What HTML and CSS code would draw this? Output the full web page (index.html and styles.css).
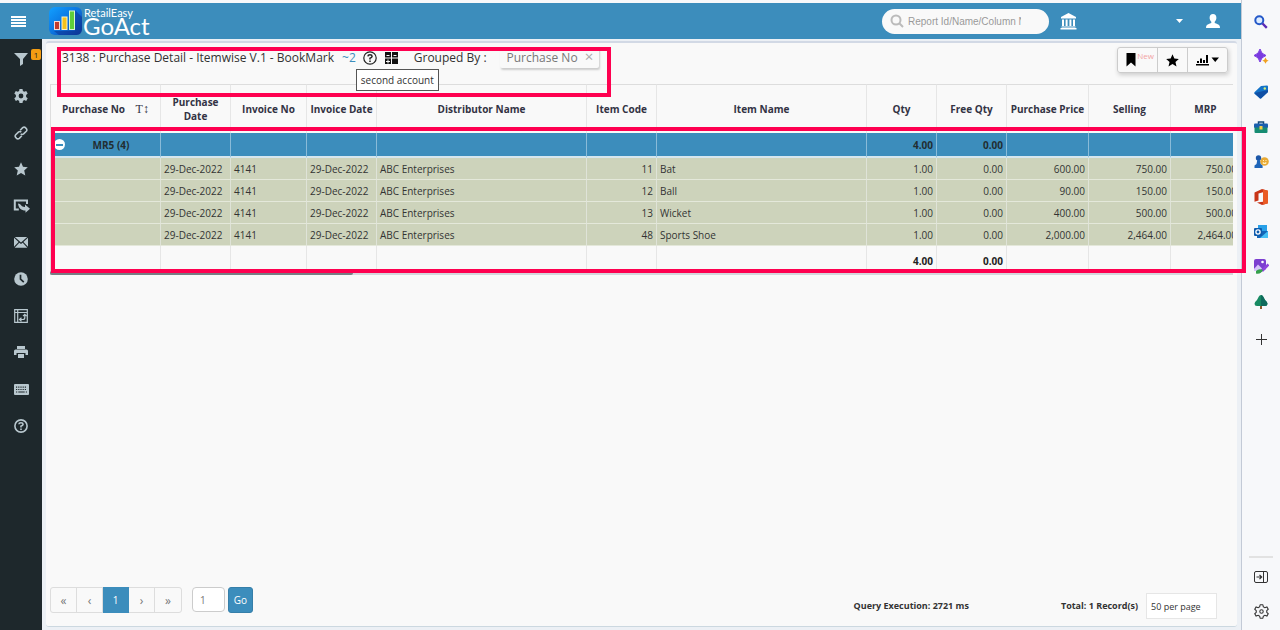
FILE: index.html
```html
<!DOCTYPE html>
<html lang="en">

<head>
  <meta charset="utf-8">
  <title>RetailEasy GoAct</title>
  <link rel="stylesheet" href="styles.css">
</head>

<body>
  <div class="app">
    <header class="topbar">
      <button class="icon-btn menu-btn" aria-label="Menu">
        <svg width="15" height="11" viewBox="0 0 15 11"><path d="M0 1h15M0 4h15M0 7h15M0 10h15" stroke="#fff" stroke-width="1.800"/></svg>
      </button>
      <a class="logo" href="#">
        <svg width="33" height="28" viewBox="0 0 33 28">
          <defs>
            <linearGradient id="lg" x1="0" y1="0" x2="1" y2="1">
              <stop offset="0" stop-color="#12a0ff"/>
              <stop offset=".5" stop-color="#0b74e0"/>
              <stop offset="1" stop-color="#123a9c"/>
            </linearGradient>
          </defs>
          <rect width="33" height="28" rx="6" fill="url(#lg)"/>
          <path d="M5 24l5 4h17q6 0 6-6V10l-7-7v21z" fill="#0a2f8f" opacity=".5"/>
          <rect x="5.500" y="14.500" width="5" height="8" fill="#c0392b" stroke="#f3d9d5"/>
          <rect x="13" y="10" width="5" height="12.500" fill="#f5c11c" stroke="#fff3c4"/>
          <rect x="20.500" y="4" width="5" height="18.500" fill="#5fce3a" stroke="#d8f8cc"/>
        </svg>
        <span class="logo-text"><small>RetailEasy</small><b>GoAct</b></span>
      </a>
      <div class="search">
        <svg width="14" height="14" viewBox="0 0 14 14" fill="none" stroke="#bbb" stroke-width="2"><circle cx="6" cy="6" r="4.500"/><path d="M9.300 9.300l3.700 3.700"/></svg>
        <input type="text" aria-label="Search report" placeholder="Report Id/Name/Column Name">
      </div>
      <button class="icon-btn bank-btn" aria-label="Branch">
        <svg width="17" height="17" viewBox="0 0 17 17" fill="#fff"><path d="M8.500 0L16 4v1.500H1V4zM2 6.500h2V13H2zM5.600 6.500h2V13h-2zM9.400 6.500h2V13h-2zM13 6.500h2V13h-2zM1.500 13.500h14v1h-14zM.5 15h16v1.500H.5z"/></svg>
      </button>
      <button class="icon-btn caret-btn" aria-label="Branch list">
        <svg width="7" height="4" viewBox="0 0 7 4"><path d="M0 0h7L3.500 4z" fill="#fff"/></svg>
      </button>
      <button class="icon-btn user-btn" aria-label="User">
        <svg width="14" height="14" viewBox="0 0 14 14" fill="#fff"><path d="M7 0c2.200 0 3.400 1.600 3.400 3.800 0 1.700-.8 3.200-1.700 4v1.300c1.600.8 4.700 1.500 5.100 3.200L14 14H0l.2-1.700c.4-1.700 3.500-2.400 5.100-3.200V7.800c-.9-.8-1.700-2.300-1.700-4C3.600 1.600 4.800 0 7 0z"/></svg>
      </button>
    </header>

    <div class="body">
      <nav class="sidebar">
        <a href="#" aria-label="Filter"><svg width="14" height="14" viewBox="0 0 14 14"><path d="M0 1h14L9 7v5l-3 2V7z"/></svg><span class="badge">1</span></a>
        <a href="#" aria-label="Settings"><svg width="14" height="14" viewBox="0 0 14 14"><path fill-rule="evenodd" d="M5.500 0h3l.4 2 1.300.7 2-.8 1.500 2.600-1.600 1.400v2l1.600 1.400-1.500 2.600-2-.8-1.300.8-.4 2.100h-3l-.4-2.100-1.300-.8-2 .8L.3 9.300l1.600-1.400v-2L.3 4.500l1.500-2.600 2 .8L5.100 2zM7 4.600a2.400 2.400 0 100 4.800 2.400 2.400 0 000-4.800z"/></svg></a>
        <a href="#" aria-label="Links"><svg class="line" width="14" height="14" viewBox="0 0 14 14"><path d="M6.200 4.300l2.500-2.600q1.400-1.200 2.800 0l.8.900q1.100 1.300 0 2.600L9.600 7.900q-1.500 1.200-2.900 0M7.800 9.700l-2.500 2.600q-1.400 1.200-2.800 0l-.8-.9q-1.100-1.300 0-2.600l2.700-2.700q1.500-1.200 2.900 0"/></svg></a>
        <a href="#" aria-label="Favourites"><svg width="14" height="14" viewBox="0 0 14 14"><path d="M7 .3l2 4.500 4.800.5-3.600 3.200 1.100 4.900L7 10.900l-4.300 2.500 1.100-4.900L.2 5.300 5 4.800z"/></svg></a>
        <a href="#" aria-label="Share"><svg width="17" height="14" viewBox="0 0 17 14"><path d="M14 5V1.500H1.800v9h4" fill="none" stroke="#b8c7ce" stroke-width="2"/><path d="M5 4.500c3 0 3 3.500 7 3.500V5.600l5 4.200-4.500 4v-2.300C8 11.500 5.500 9 5 4.500z"/></svg></a>
        <a href="#" aria-label="Mail"><svg width="14" height="11" viewBox="0 0 14 11"><path d="M.8 0h12.400L7 5.600zM0 .7L4.600 5 0 9.800zM14 .7L9.400 5 14 9.800zM5.300 5.700L7 7.100l1.700-1.400 4.600 5.100H.7z"/></svg></a>
        <a href="#" aria-label="Schedule"><svg width="14" height="14" viewBox="0 0 14 14"><circle cx="7" cy="7" r="6.800"/><path d="M6.500 2.800v4.400l3.300 3" fill="none" stroke="#1e282c" stroke-width="1.700"/></svg></a>
        <a href="#" aria-label="Pivot"><svg class="line thin" width="14" height="14" viewBox="0 0 14 14"><path d="M.7.700h12.600v12.600H.7zM.7 3.500h12.600M3.700.7v12.600M6 10.500h3q1.800 0 1.800-2V6M7.500 8.700l-2 1.800 2 1.800M9 7.200l1.800-1.800 1.700 1.800"/></svg></a>
        <a href="#" aria-label="Print"><svg width="14" height="12" viewBox="0 0 14 12"><path fill-rule="evenodd" d="M3 0h8v3H3zM1.500 3.500h11Q14 3.500 14 5v4h-2.500V7h-9v2H0V5q0-1.500 1.500-1.500zM4 8h6v4H4z"/></svg></a>
        <a href="#" aria-label="Keyboard"><svg width="15" height="11" viewBox="0 0 15 11"><rect width="15" height="11" rx="1"/><path d="M2 3.200h11M2 5.500h11" stroke="#1e282c" stroke-width="1.200" stroke-dasharray="1.200 1"/><path d="M2 8h1.200M4.300 8h6.400M11.800 8H13" stroke="#1e282c" stroke-width="1.200"/></svg></a>
        <a href="#" aria-label="Help"><svg class="line" width="14" height="14" viewBox="0 0 14 14"><circle cx="7" cy="7" r="6.100"/><path d="M4.900 5.300Q5 3.800 7 3.800t2.100 1.500Q9.100 6.500 7 7.200v1.200M7 9.500v1.600"/></svg></a>
      </nav>

      <main class="panel">
        <div class="title-row">
          <h1>3138 : Purchase Detail - Itemwise V.1 - BookMark</h1>
          <a class="count" href="#">~2</a>
          <button class="icon-btn help-btn" aria-label="Help">
            <svg width="14" height="14" viewBox="0 0 14 14" fill="none" stroke="#222" stroke-width="1.200"><circle cx="7" cy="7" r="6.200"/><path d="M4.900 5.400Q5 3.800 7 3.800t2.100 1.500Q9.100 6.500 7 7.200v1.200M7 9.500v1.400" stroke-width="1.500"/></svg>
            <span class="tooltip">second account</span>
          </button>
          <button class="icon-btn calc-btn" aria-label="Calculator">
            <svg width="13" height="12" viewBox="0 0 13 12"><path d="M0 0h6v5.500H0zM7 0h6v5.500H7zM0 6.500h6V12H0zM7 6.500h6V12H7z" fill="#111"/><path d="M1.500 3.500h3M1 9.500h4M3 7.500v4M8.500 3.500h3" stroke="#f9f9f9"/></svg>
          </button>
          <span class="grouped">Grouped By :</span>
          <span class="chip">Purchase No <button aria-label="Remove grouping">×</button></span>
          <div class="tools">
            <button aria-label="Bookmark"><svg width="10" height="14" viewBox="0 0 10 14"><path d="M.5 0h9v13.500L5 9.500l-4.500 4z"/></svg><sup>New</sup></button>
            <button aria-label="Favourite"><svg width="13" height="13" viewBox="0 0 14 14"><path d="M7 .3l2 4.500 4.800.5-3.600 3.200 1.100 4.900L7 10.900l-4.300 2.500 1.100-4.900L.2 5.300 5 4.800z"/></svg></button>
            <button aria-label="Chart"><svg width="23" height="12" viewBox="0 0 23 12"><path d="M0 10h13v1.500H0zM1 7h2v2H1zM4 4.500h2V9H4zM7 6h2v3H7zM10 1h2v8h-2zM15.500 3.500H23L19.200 8z"/></svg></button>
          </div>
          <div class="mark mark-title"></div>
        </div>

        <div class="grid">
          <div class="grid-scroll">
            <table>
              <colgroup>
                <col class="w-no"><col class="w-sm"><col class="w-inv"><col class="w-sm"><col class="w-name"><col class="w-sm"><col class="w-name"><col class="w-sm"><col class="w-sm"><col class="w-price"><col class="w-price"><col class="w-sm">
              </colgroup>
              <thead>
                <tr>
                  <th>Purchase No <span class="sort">T↕</span></th>
                  <th>Purchase Date</th>
                  <th>Invoice No</th>
                  <th>Invoice Date</th>
                  <th>Distributor Name</th>
                  <th>Item Code</th>
                  <th>Item Name</th>
                  <th>Qty</th>
                  <th>Free Qty</th>
                  <th>Purchase Price</th>
                  <th>Selling</th>
                  <th>MRP</th>
                </tr>
              </thead>
              <tbody>
                <tr class="group">
                  <td><div class="group-name"><button aria-label="Collapse group"></button><span>MR5 (4)</span></div></td>
                  <td></td><td></td><td></td><td></td><td></td><td></td>
                  <td class="num">4.00</td><td class="num">0.00</td><td></td><td></td><td></td>
                </tr>
                <tr>
                  <td></td><td>29-Dec-2022</td><td>4141</td><td>29-Dec-2022</td><td>ABC Enterprises</td><td class="num">11</td><td>Bat</td>
                  <td class="num">1.00</td><td class="num">0.00</td><td class="num">600.00</td><td class="num">750.00</td><td class="num">750.00</td>
                </tr>
                <tr>
                  <td></td><td>29-Dec-2022</td><td>4141</td><td>29-Dec-2022</td><td>ABC Enterprises</td><td class="num">12</td><td>Ball</td>
                  <td class="num">1.00</td><td class="num">0.00</td><td class="num">90.00</td><td class="num">150.00</td><td class="num">150.00</td>
                </tr>
                <tr>
                  <td></td><td>29-Dec-2022</td><td>4141</td><td>29-Dec-2022</td><td>ABC Enterprises</td><td class="num">13</td><td>Wicket</td>
                  <td class="num">1.00</td><td class="num">0.00</td><td class="num">400.00</td><td class="num">500.00</td><td class="num">500.00</td>
                </tr>
                <tr>
                  <td></td><td>29-Dec-2022</td><td>4141</td><td>29-Dec-2022</td><td>ABC Enterprises</td><td class="num">48</td><td>Sports Shoe</td>
                  <td class="num">1.00</td><td class="num">0.00</td><td class="num">2,000.00</td><td class="num">2,464.00</td><td class="num">2,464.00</td>
                </tr>
              </tbody>
              <tfoot>
                <tr>
                  <td></td><td></td><td></td><td></td><td></td><td></td><td></td>
                  <td class="num">4.00</td><td class="num">0.00</td><td></td><td></td><td></td>
                </tr>
              </tfoot>
            </table>
          </div>
          <div class="scrollbar"><div class="thumb"></div></div>
          <div class="mark mark-grid"></div>
        </div>

        <footer class="footer">
          <div class="pages">
            <button aria-label="First page">«</button>
            <button aria-label="Previous page">‹</button>
            <button class="active">1</button>
            <button aria-label="Next page">›</button>
            <button aria-label="Last page">»</button>
          </div>
          <input class="page-no" type="text" aria-label="Page number" value="1">
          <button class="go">Go</button>
          <span class="query">Query Execution: 2721 ms</span>
          <label class="total" for="per-page">Total: 1 Record(s)</label>
          <select id="per-page">
            <option>50 per page</option>
            <option>100 per page</option>
          </select>
        </footer>
      </main>
    </div>
  </div>

  <aside class="edge">
    <a href="#" aria-label="Search"><svg width="14" height="14" viewBox="0 0 14 14" fill="none"><circle cx="5.300" cy="5.300" r="4" fill="#dcecff" stroke="#2458c8" stroke-width="2"/><path d="M8.500 8.500l4.300 4.300" stroke="#5b2bb5" stroke-width="2.400"/></svg></a>
    <a href="#" aria-label="Discover"><svg width="15" height="15" viewBox="0 0 15 15"><path d="M6 0q1 5 6 6.500Q7 8 6 13 5 8 0 6.500 5 5 6 0z" fill="#7a3be0" stroke="#7a3be0"/><path d="M11.500 8.500q.6 2.500 3.200 3-2.600.7-3.200 3.200-.6-2.500-3.200-3.200 2.600-.5 3.200-3z" fill="#f0a020"/></svg></a>
    <a href="#" aria-label="Shopping"><svg width="14" height="14" viewBox="0 0 14 14"><path d="M7 1l6-.5q1 0 1 1V7l-6.500 6q-1 1-2 0L.7 9q-1-1 0-2z" fill="#1473c8"/><path d="M.5 8L14 5v2l-6.500 6q-1 1-2 0z" fill="#0f4fa5"/><circle cx="10.800" cy="3.500" r="1.200" fill="#d8f07a"/></svg></a>
    <a href="#" aria-label="Tools"><svg width="14" height="12" viewBox="0 0 14 12"><path d="M4.500 3V1h5v2" fill="none" stroke="#174a7a" stroke-width="1.500"/><rect y="2.500" width="14" height="4.500" rx="1" fill="#1b5fae"/><path d="M.5 6.500h13V11q0 1-1 1h-11q-1 0-1-1z" fill="#168c72"/><rect x="5.500" y="5" width="3" height="3.500" fill="#f4ce45"/></svg></a>
    <a href="#" aria-label="Games"><svg width="15" height="13" viewBox="0 0 15 13"><circle cx="10.500" cy="6.500" r="4.300" fill="#e8aa35"/><path d="M9 5.500h1M11.500 5.500h1M8.800 7.500q1.700 2 3.500 0" fill="none" stroke="#fff0c0" stroke-width="1.200"/><circle cx="4.500" cy="3" r="2.700" fill="#1c57a8"/><path d="M3.300 5h2.500l.8 4 2 1.500V13H.5v-2.500l2-1.500z" fill="#1f65b8"/></svg></a>
    <a href="#" aria-label="Office"><svg width="14" height="16" viewBox="0 0 14 16"><path d="M8 0l6 1.800v12.400L8 16l-5-2.500 6-.7V3.200L4.500 4.500v7L.5 12.800V3.500z" fill="#c83518"/><path d="M9 .5l5 1.300v12.400L9 15.700z" fill="#ea5b24"/></svg></a>
    <a href="#" aria-label="Outlook"><svg width="14" height="14" viewBox="0 0 14 14"><path d="M4 0h9v8H4z" fill="#28a0e8"/><path d="M3 6l11 0v7H3z" fill="#1466b8"/><path d="M14 6l-8 7h8z" fill="#45c0f5"/><rect y="3" width="8" height="8" rx="1" fill="#0f5cad"/><circle cx="4" cy="7" r="2.100" fill="none" stroke="#fff" stroke-width="1.300"/></svg></a>
    <a href="#" aria-label="Image creator"><svg width="16" height="15" viewBox="0 0 16 15"><rect x="1" width="12" height="11" rx="2" fill="#7c3fd0"/><circle cx="9.500" cy="3" r="1.300" fill="#fff"/><path d="M1 10l4-4.500 4 4L7 12H1z" fill="#d7c4fa"/><path d="M15.500 5.500L9 12" stroke="#8f45dd" stroke-width="2.600"/><path d="M3 12q3-3 7-1-2 4.500-7 3.500z" fill="#35a04c"/></svg></a>
    <a href="#" aria-label="Drop"><svg width="14" height="14" viewBox="0 0 14 14"><path d="M6 9h2v5H6z" fill="#8a5a2b"/><path d="M7 0q1.500 0 2.300 1.800L11 5q2.500 2 2.500 3.800Q13.500 11 11 11H3Q.5 11 .5 8.800.5 7 3 5l1.700-3.200Q5.500 0 7 0z" fill="#178a62"/><path d="M7 0q1.500 0 2.300 1.800L11 5q2.500 2 2.500 3.800Q13.500 11 11 11H7z" fill="#0f6b5c"/></svg></a>
    <a class="add" href="#" aria-label="Add"><svg width="11" height="11" viewBox="0 0 11 11"><path d="M5.500 0v11M0 5.500h11" stroke="#333"/></svg></a>
    <hr>
    <a href="#" aria-label="Hide sidebar"><svg width="14" height="12" viewBox="0 0 14 12" fill="none" stroke="#333"><rect x=".5" y=".5" width="13" height="11" rx="1.500"/><path d="M9.500.5v11"/><path d="M2.500 6h5M5.500 3.800L7.700 6 5.500 8.200" stroke-width="1.200"/></svg></a>
    <a href="#" aria-label="Settings"><svg width="15" height="15" viewBox="0 0 14 14" fill="none" stroke="#333"><path stroke-linejoin="round" d="M5.700.7h2.600l.4 1.900 1.300.8 2-.7 1.300 2.200L11.900 6.200v1.600l1.400 1.300L12 11.300l-2-.7-1.300.8-.4 1.900H5.700l-.4-1.900-1.300-.8-2 .7L.7 9.100l1.400-1.300V6.200L.7 4.900 2 2.700l2 .7 1.300-.8z"/><circle cx="7" cy="7" r="1.600"/></svg></a>
  </aside>
</body>

</html>
```
FILE: styles.css
```css
* {
  box-sizing: border-box;
}

body {
  display: flex;
  height: 100vh;
  margin: 0;
  overflow: hidden;
  background: #f7f8fa;
  color: #333;
  font-family: "Open Sans", "Noto Sans", sans-serif;
  font-size: 10px;
}

button, input, select {
  font: inherit;
  color: inherit;
}

a {
  color: inherit;
  text-decoration: none;
}

svg {
  display: block;
}

.icon-btn {
  padding: 0;
  border: 0;
  background: none;
}

.app {
  flex: 1;
  min-width: 0;
  display: flex;
  flex-direction: column;
  padding-top: 3px;
  border-right: 1px solid #c3cad6;
}

/* top bar */
.topbar {
  display: flex;
  align-items: center;
  height: 36px;
  padding: 0 21px 0 11px;
  background: #3c8dbc;
}

.logo {
  display: flex;
  align-items: center;
  margin-left: 23px;
  color: #fff;
  font-family: Lato, sans-serif;
}

.logo-text {
  display: flex;
  flex-direction: column;
  margin-left: 1px;
  padding-bottom: 2px;
}

.logo-text small {
  padding-left: 1px;
  font-size: 11px;
  line-height: 11px;
}

.logo-text b {
  font-size: 24px;
  font-weight: 400;
  line-height: 15px;
}

.search {
  display: flex;
  align-items: center;
  gap: 4px;
  width: 167px;
  height: 25px;
  margin-left: auto;
  padding: 0 28px 0 8px;
  border-radius: 13px;
  background: #f9f9f9;
}

.search svg {
  flex: none;
}

.search input {
  min-width: 0;
  width: 100%;
  padding: 0;
  border: 0;
  background: none;
  font-family: "Liberation Sans", sans-serif;
}

.search input::placeholder {
  color: #999;
}

.bank-btn {
  margin-left: 11px;
}

.caret-btn {
  margin-left: 99px;
}

.user-btn {
  margin-left: 23px;
}

.body {
  flex: 1;
  min-height: 0;
  display: flex;
  background: #ecf0f5;
}

/* left menu */
.sidebar {
  display: grid;
  grid-template-rows: repeat(11, 1fr);
  width: 42px;
  padding: 2px 0 186px;
  background: #1e282c;
}

.sidebar a {
  position: relative;
  display: flex;
  align-items: center;
  justify-content: center;
}

.sidebar svg {
  fill: #b8c7ce;
}

.sidebar svg.line {
  fill: none;
  stroke: #b8c7ce;
  stroke-width: 1.6;
}

.sidebar svg.thin {
  stroke-width: 1.2;
}

.badge {
  position: absolute;
  top: 8px;
  right: 1px;
  width: 10px;
  border-radius: 2px;
  background: #f39c12;
  color: #222;
  font-size: 8px;
  line-height: 11px;
  text-align: center;
}

/* report panel */
.panel {
  flex: 1;
  min-width: 0;
  display: flex;
  flex-direction: column;
  margin: 2px 4px 3px;
  border-top: 2px solid #d2d9e5;
  border-bottom: 1px solid #ccd8e0;
  border-radius: 3px;
  background: #f9f9f9;
}

.title-row {
  position: relative;
  display: flex;
  align-items: flex-start;
  height: 41px;
  padding: 3px 9px 0 16px;
  font-size: 12px;
  font-weight: 500;
  line-height: 24px;
  white-space: nowrap;
}

h1 {
  margin: 0;
  font-size: 12px;
  font-weight: 500;
}

.count {
  margin-left: 8px;
  color: #3c8dbc;
}

.help-btn {
  position: relative;
  height: 24px;
  margin-left: 7px;
}

.calc-btn {
  height: 24px;
  margin-left: 8px;
}

.tooltip {
  position: absolute;
  z-index: 2;
  top: 23px;
  left: -7px;
  padding: 0 4px;
  border: 1px solid #555;
  background: #fff;
  font-size: 10px;
  font-weight: 400;
  line-height: 20px;
}

.grouped {
  margin-left: 16px;
}

.chip {
  margin-left: 13px;
  padding: 0 6px 0 7px;
  border-radius: 2px;
  box-shadow: 1px 2px 2px #ccc;
  color: #777;
  line-height: 21px;
}

.chip button {
  padding: 0;
  margin-left: 4px;
  border: 0;
  background: none;
  color: #aaa;
  font-size: 15px;
  line-height: 20px;
}

.tools {
  display: flex;
  height: 26px;
  margin-top: 1px;
  margin-left: auto;
  border: 1px solid #ccc;
  border-radius: 3px;
  box-shadow: 1px 2px 4px #ccc;
}

.tools button {
  display: flex;
  align-items: center;
  padding: 0 8px;
  border: 0;
  border-left: 1px solid #ccc;
  background: none;
}

.tools button:first-child {
  padding-right: 3px;
  border-left: 0;
}

.tools sup {
  align-self: flex-start;
  margin-left: 1px;
  color: #f2a3a3;
  font-size: 8px;
  line-height: 16px;
}

.mark {
  position: absolute;
  border: 4px solid #ff0050;
  pointer-events: none;
}

.mark-title {
  z-index: 1;
  top: 4px;
  left: 11px;
  width: 554px;
  height: 50px;
}

/* data grid */
.grid {
  position: relative;
  margin: 0 4px;
}

.grid-scroll {
  overflow: hidden;
  border-left: 1px solid #ddd;
}

table {
  width: 1190px;
  table-layout: fixed;
  border-collapse: separate;
  border-spacing: 0;
}

.w-no {
  width: 110px;
}

.w-sm {
  width: 70px;
}

.w-inv {
  width: 76px;
}

.w-name {
  width: 210px;
}

.w-price {
  width: 82px;
}

th {
  height: 49px;
  padding: 0 2px;
  border-top: 1px solid #ddd;
  border-right: 1px solid #e6e6e6;
  color: #333344;
  font-weight: 700;
  line-height: 14px;
}

.sort {
  margin-left: 8px;
  font-family: "Liberation Serif", serif;
  font-size: 12px;
  font-weight: 400;
}

td {
  height: 22px;
  padding: 0 3px;
  border-right: 1px solid #dfe3d8;
  border-bottom: 1px solid #e4e8da;
  background: #cdd3bb;
  line-height: 20px;
  white-space: nowrap;
}

.num {
  text-align: right;
}

.group td {
  height: 25px;
  border-right-color: #8abbd8;
  border-bottom: 2px solid #d5e6ee;
  background: #3c8dbc;
  color: #222d32;
  font-weight: 700;
}

.group-name {
  display: flex;
  align-items: center;
}

.group-name span {
  flex: 1;
  text-align: center;
}

.group-name button {
  display: flex;
  align-items: center;
  justify-content: center;
  width: 11px;
  height: 11px;
  padding: 0;
  border: 0;
  border-radius: 50%;
  background: #fff;
}

.group-name button::after {
  content: '';
  width: 7px;
  height: 2px;
  background: #3c8dbc;
}

tfoot td {
  height: 25px;
  padding-top: 4px;
  border-right-color: #e6e6e6;
  border-bottom: 0;
  background: none;
  color: #222;
  font-weight: 700;
}

.scrollbar {
  height: 4px;
  background: #d5d6dc;
}

.thumb {
  width: 303px;
  height: 4px;
  border-radius: 2px;
  background: #777d84;
}

.mark-grid {
  top: 43px;
  right: -13px;
  bottom: 2px;
  left: 1px;
}

/* footer */
.footer {
  display: flex;
  align-items: flex-start;
  margin-top: auto;
  padding: 0 20px 7px 4px;
}

.pages {
  display: flex;
  height: 26px;
  border: 1px solid #ddd;
  border-radius: 3px;
}

.pages button {
  width: 26px;
  padding: 0;
  border: 0;
  border-right: 1px solid #ddd;
  background: none;
  color: #777;
  font-size: 12px;
}

.pages button:last-child {
  border-right: 0;
}

.pages .active {
  margin: -1px 0;
  border-color: #3c8dbc;
  background: #3c8dbc;
  color: #fff;
  font-size: 10px;
}

.page-no {
  width: 33px;
  height: 25px;
  margin-left: 10px;
  padding: 0 7px;
  border: 1px solid #ccc;
  border-radius: 4px;
  background: #fff;
  color: #777;
}

.go {
  width: 25px;
  height: 26px;
  margin-left: 3px;
  padding: 0;
  border: 1px solid #367fa9;
  border-radius: 3px;
  background: #3c8dbc;
  color: #fff;
}

.query, .total {
  margin-top: 6px;
  font-size: 9px;
  font-weight: 700;
  line-height: 25px;
}

.query {
  margin-left: auto;
}

.total {
  margin-left: 92px;
}

select {
  appearance: none;
  width: 71px;
  height: 26px;
  margin-top: 6px;
  margin-left: 8px;
  padding: 0 4px;
  border: 1px solid #e6e6e6;
  background: #fff;
  font-size: 9px;
}

/* browser side bar */
.edge {
  display: flex;
  flex-direction: column;
  align-items: center;
  width: 38px;
  padding-top: 4px;
}

.edge a {
  display: flex;
  align-items: center;
  height: 35px;
}

.edge .add {
  margin-top: 3px;
}

.edge hr {
  width: 24px;
  margin: auto 0 1px;
  border: 0;
  border-top: 2px solid #e2e2e2;
}

.edge a:last-child {
  margin-bottom: 1px;
}
```
